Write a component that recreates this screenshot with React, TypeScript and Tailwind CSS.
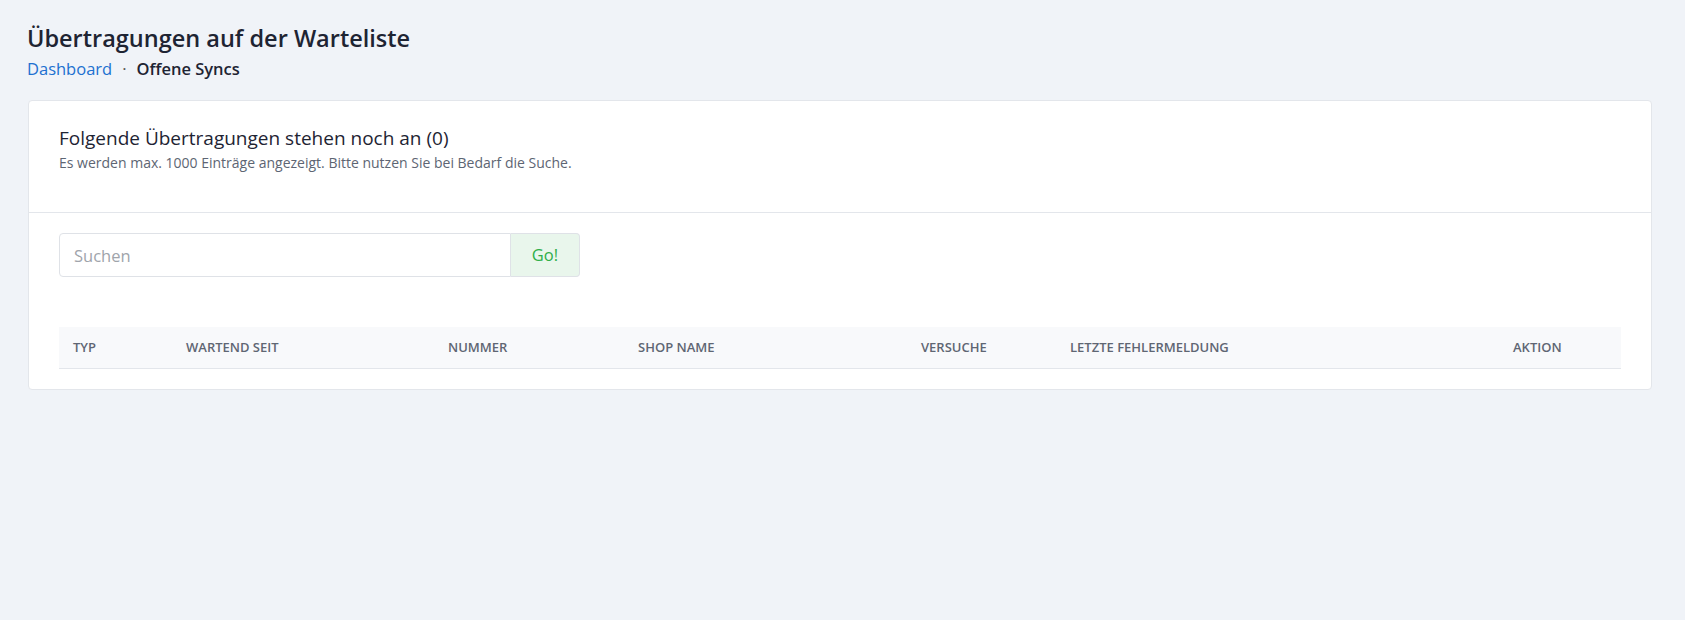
import React from "react";

const cols = [
  { label: "Typ", w: "w-[113px]" },
  { label: "Wartend seit", w: "w-[262px]" },
  { label: "Nummer", w: "w-[190px]" },
  { label: "Shop Name", w: "w-[283px]" },
  { label: "Versuche", w: "w-[149px]" },
  { label: "Letzte Fehlermeldung", w: "w-[443px]" },
  { label: "Aktion", w: "flex-1" },
];

export default function App() {
  return (
    <div
      className="min-h-[620px] bg-[#f0f3f8] px-[27px] pt-[22px]"
      style={{ fontFamily: '"Open Sans", "Noto Sans", sans-serif' }}
    >
      <h1 className="text-[23.5px] font-semibold leading-[32px] text-[#1e2433]">
        Übertragungen auf der Warteliste
      </h1>
      <div className="mt-[3px] flex items-center text-[16.5px] leading-[23px]">
        <a className="text-[#2070d0]">Dashboard</a>
        <span className="mx-[10px] text-[#555]">·</span>
        <span className="font-semibold text-[#1e2433]">Offene Syncs</span>
      </div>

      <div className="mt-[20px] mr-[6px] ml-[1px] rounded-[4px] border border-[#e3e6eb] bg-white">
        <div className="border-b border-[#e3e6eb] px-[30px] pt-[24px] pb-[39px]">
          <div className="text-[19px] leading-[26px] text-[#1e2433]">
            Folgende Übertragungen stehen noch an (0)
          </div>
          <div className="mt-[2px] text-[14px] leading-[20px] text-[#5d6573]">
            Es werden max. 1000 Einträge angezeigt. Bitte nutzen Sie bei Bedarf die Suche.
          </div>
        </div>
        <div className="px-[30px] pt-[20px] pb-[20px]">
          <div className="flex h-[44px] w-[521px]">
            <input
              placeholder="Suchen"
              className="h-full w-[452px] rounded-l-[4px] border border-[#dfe2e7] px-[14px] text-[16.5px] text-[#333] outline-none placeholder:text-[#a0a4ab]"
            />
            <button className="h-full w-[69px] rounded-r-[4px] border border-l-0 border-[#dfe2e7] bg-[#e9f6ec] text-[16.5px] text-[#2fae49]">
              Go!
            </button>
          </div>
          <div className="mt-[50px] flex h-[42px] border-b border-[#e3e6eb] bg-[#f8f9fb]">
            {cols.map((c) => (
              <div
                key={c.label}
                className={`${c.w} flex items-center px-[14px] text-[13px] font-semibold uppercase text-[#5f6673]`}
              >
                {c.label}
              </div>
            ))}
          </div>
        </div>
      </div>
    </div>
  );
}
